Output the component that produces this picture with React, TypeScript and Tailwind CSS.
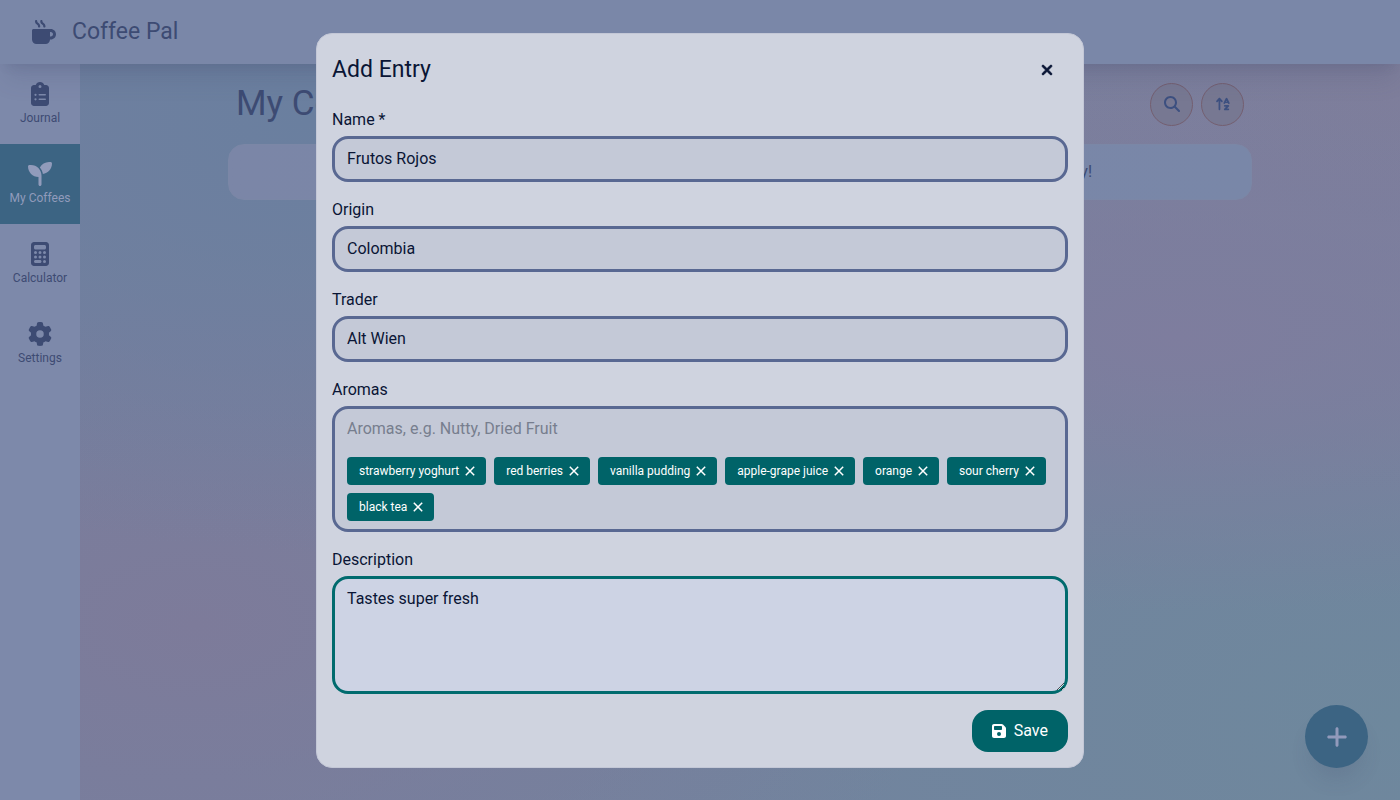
import { useState, type ReactNode } from "react";
import {
  FaMugHot,
  FaClipboardList,
  FaSeedling,
  FaCalculator,
  FaGear,
  FaMagnifyingGlass,
  FaArrowUpAZ,
  FaPlus,
  FaXmark,
  FaFloppyDisk,
} from "react-icons/fa6";

const navItems = [
  { label: "Journal", icon: FaClipboardList, active: false },
  { label: "My Coffees", icon: FaSeedling, active: true },
  { label: "Calculator", icon: FaCalculator, active: false },
  { label: "Settings", icon: FaGear, active: false },
];

const textFields = [
  { id: "name", label: "Name *", value: "Frutos Rojos" },
  { id: "origin", label: "Origin", value: "Colombia" },
  { id: "trader", label: "Trader", value: "Alt Wien" },
];

const initialAromas = [
  "strawberry yoghurt",
  "red berries",
  "vanilla pudding",
  "apple-grape juice",
  "orange",
  "sour cherry",
  "black tea",
];

function Header() {
  return (
    <header className="relative z-10 flex h-16 shrink-0 items-center gap-4 bg-[#7a87a8] px-8 text-[#3d4b73] shadow-[0_20px_25px_-5px_rgba(60,65,100,0.14),0_8px_10px_-6px_rgba(60,65,100,0.14)]">
      <FaMugHot className="size-6" />
      <span className="text-[23px]">Coffee Pal</span>
    </header>
  );
}

function Sidebar() {
  return (
    <nav className="w-20 shrink-0 bg-[#7d89aa]">
      {navItems.map(({ label, icon: Icon, active }) => (
        <a
          key={label}
          href="#"
          className={
            active
              ? "flex h-20 flex-col items-center justify-center gap-1 bg-[#3c6483] text-[#919bbb]"
              : "flex h-20 flex-col items-center justify-center gap-1 text-[#3d4b73]"
          }
        >
          <Icon className="size-6" />
          <span className="text-xs">{label}</span>
        </a>
      ))}
    </nav>
  );
}

function RoundButton({ label, children }: { label: string; children: ReactNode }) {
  return (
    <button
      type="button"
      aria-label={label}
      className="flex size-[43px] items-center justify-center rounded-full border border-[#745f70] bg-[#777892] text-[#3d5080]"
    >
      {children}
    </button>
  );
}

function CoffeesPage() {
  return (
    <main className="flex-1 px-4 pt-4">
      <div className="mx-auto max-w-5xl">
        <div className="flex h-12 items-center justify-between px-2">
          <h1 className="text-[35px] text-[#3d4b73]">My Coffees</h1>
          <div className="flex gap-2">
            <RoundButton label="Search">
              <FaMagnifyingGlass className="size-4" />
            </RoundButton>
            <RoundButton label="Sort">
              <FaArrowUpAZ className="size-4" />
            </RoundButton>
          </div>
        </div>
        <p className="mt-4 rounded-2xl border border-[#7b87a6] bg-linear-to-r from-[#7b86a7] to-[#7987a8] py-[15px] text-center text-[#3d4b73]">
          You have not added any coffees yet... Hit the plus button to add your first coffee to the library today!
        </p>
      </div>
    </main>
  );
}

function EntryDialog() {
  const [aromas, setAromas] = useState(initialAromas);
  const fieldClass =
    "w-full rounded-2xl border-3 border-[#596892] bg-[#c4c9d7] px-3 py-2 text-base outline-none";

  return (
    <div className="fixed inset-0 z-20 flex items-center justify-center p-4">
      <div
        role="dialog"
        aria-modal="true"
        aria-labelledby="dialog-title"
        className="w-full max-w-3xl rounded-2xl border border-[#c3c7d6] bg-[#cfd3df] p-[15px] text-[#0a1535]"
      >
        <div className="flex h-[43px] items-center justify-between">
          <h2 id="dialog-title" className="text-[23px]">Add Entry</h2>
          <button type="button" aria-label="Close" className="px-[13px] py-2">
            <FaXmark className="size-4" strokeWidth={24} stroke="currentColor" />
          </button>
        </div>
        <form className="mt-4 flex flex-col gap-4" onSubmit={(e) => e.preventDefault()}>
          {textFields.map((field) => (
            <div key={field.id} className="flex flex-col gap-1">
              <label htmlFor={field.id}>{field.label}</label>
              <input id={field.id} type="text" defaultValue={field.value} className={fieldClass} />
            </div>
          ))}
          <div className="flex flex-col gap-1">
            <label htmlFor="aromas">Aromas</label>
            <div className="rounded-2xl border-3 border-[#596892] bg-[#c4c9d7] px-3 py-2">
              <input
                id="aromas"
                type="text"
                placeholder="Aromas, e.g. Nutty, Dried Fruit"
                className="block w-full outline-none placeholder:text-[#777e8e]"
              />
              <div className="mt-4 flex flex-wrap gap-2">
                {aromas.map((aroma) => (
                  <button
                    key={aroma}
                    type="button"
                    onClick={() => setAromas(aromas.filter((item) => item !== aroma))}
                    className="flex h-7 items-center gap-1.5 rounded-sm bg-[#006368] pr-[11px] pl-3 text-xs text-white"
                  >
                    {aroma}
                    <svg viewBox="0 0 10 10" className="size-2.5" stroke="currentColor" strokeWidth="1.5" aria-hidden="true">
                      <path d="M0.8 0.8l8.4 8.4M9.2 0.8l-8.4 8.4" />
                    </svg>
                  </button>
                ))}
              </div>
            </div>
          </div>
          <div className="flex flex-col gap-1">
            <label htmlFor="description">Description</label>
            <textarea
              id="description"
              rows={4}
              defaultValue="Tastes super fresh"
              className="block h-[118px] w-full rounded-2xl border-3 border-[#006b6e] bg-[#cdd3e4] px-3 py-2 outline-none"
            />
          </div>
          <button
            type="submit"
            className="flex items-center gap-2 self-end rounded-2xl bg-[#006368] px-5 py-[9px] text-white"
          >
            <FaFloppyDisk className="h-4 w-3.5" preserveAspectRatio="xMidYMid slice" />
            Save
          </button>
        </form>
      </div>
    </div>
  );
}

export default function App() {
  return (
    <div className="flex min-h-screen flex-col bg-[#75809f] bg-[radial-gradient(at_22%_15%,#6a7f9f_0,transparent_45%),radial-gradient(at_84%_42%,#7e7d9e_0,transparent_42%),radial-gradient(at_100%_12%,#7e7e9b_0,transparent_40%),radial-gradient(at_14%_78%,#7d7b9a_0,transparent_45%),radial-gradient(at_100%_90%,#6e889d_0,transparent_60%)] font-[Roboto,sans-serif]">
      <Header />
      <div className="flex flex-1">
        <Sidebar />
        <CoffeesPage />
      </div>
      <button
        type="button"
        aria-label="Add coffee"
        className="fixed right-8 bottom-8 flex size-[63px] items-center justify-center rounded-full bg-[#3c6483] text-[#929abb] shadow-[0_16px_20px_-5px_rgba(60,65,100,0.15)]"
      >
        <FaPlus className="size-6" />
      </button>
      <EntryDialog />
    </div>
  );
}
